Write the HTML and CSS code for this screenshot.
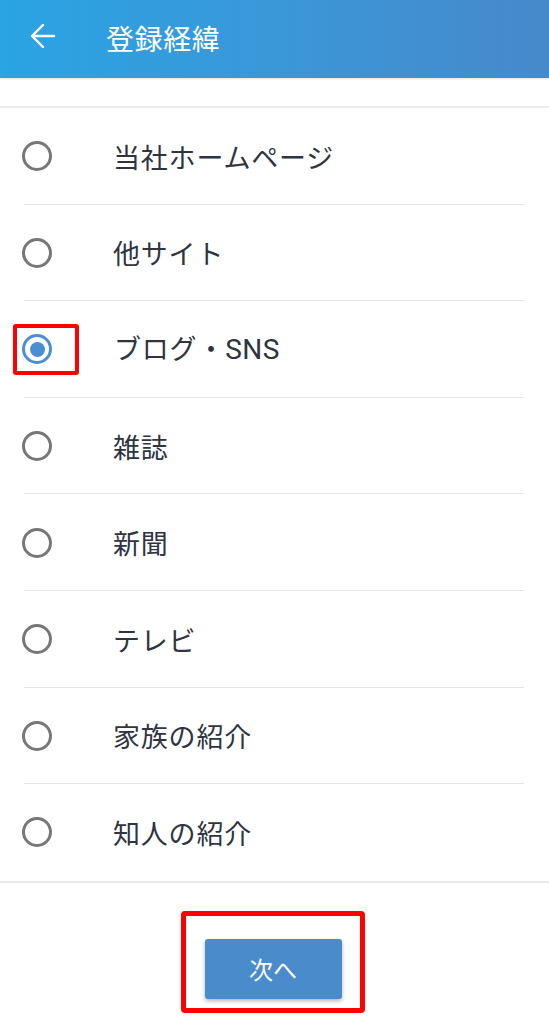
FILE: index.html
```html
<!DOCTYPE html>
<html lang="ja">
<head>
<meta charset="utf-8">
<title>登録経緯</title>
<link rel="stylesheet" href="styles.css">
</head>
<body>
<header class="appbar">
  <span class="back">
    <svg viewBox="0 0 26 26" width="26" height="26"><path d="M2 13H24M13 2L2 13L13 24" fill="none" stroke="#fff" stroke-width="2.4" stroke-linecap="round" stroke-linejoin="round"/></svg>
  </span>
  <h1 class="title">登録経緯</h1>
</header>
<main>
  <ul class="list">
    <li class="row"><span class="radio"></span><span class="label">当社ホームページ</span></li>
    <li class="row"><span class="radio"></span><span class="label">他サイト</span></li>
    <li class="row"><span class="mark"><span class="radio checked"></span></span><span class="label">ブログ・<span class="latin">SNS</span></span></li>
    <li class="row"><span class="radio"></span><span class="label">雑誌</span></li>
    <li class="row"><span class="radio"></span><span class="label">新聞</span></li>
    <li class="row"><span class="radio"></span><span class="label">テレビ</span></li>
    <li class="row"><span class="radio"></span><span class="label">家族の紹介</span></li>
    <li class="row"><span class="radio"></span><span class="label">知人の紹介</span></li>
  </ul>
  <div class="actions">
    <div class="btnmark"><button class="next">次へ</button></div>
  </div>
</main>
</body>
</html>
```
FILE: styles.css
```css
* { box-sizing: border-box; }
html, body { margin: 0; padding: 0; }
body {
  width: 549px;
  height: 1024px;
  overflow: hidden;
  background: #fff;
  font-family: "Noto Sans CJK JP", "Noto Sans", Roboto, sans-serif;
  color: #2e3440;
}
.appbar {
  height: 78px;
  background: linear-gradient(90deg, #2aa4e4 0%, #3a97d8 50%, #4789cb 100%);
  display: flex;
  align-items: center;
  box-shadow: 0 1px 2px rgba(0,0,0,0.12);
}
.back {
  width: 26px;
  height: 26px;
  margin-left: 30px;
  margin-top: -6px;
  display: flex;
}
.title {
  margin: -2px 0 0 50px;
  font-size: 28px;
  font-weight: 400;
  color: #fff;
  line-height: 1;
  letter-spacing: 0.6px;
}
.list {
  list-style: none;
  margin: 28px 0 0;
  padding: 0;
  border-top: 2px solid #ebebeb;
  border-bottom: 2px solid #ebebeb;
}
.row {
  height: 96.6px;
  display: flex;
  align-items: center;
  position: relative;
}
.row + .row::before {
  content: "";
  position: absolute;
  top: -1px;
  left: 24px;
  right: 25px;
  height: 1px;
  background: #e6e6e6;
}
.radio {
  width: 30px;
  height: 30px;
  border: 3px solid #777;
  border-radius: 50%;
  margin-left: 22px;
  flex: none;
  display: flex;
  align-items: center;
  justify-content: center;
}
.radio.checked {
  border-color: #4a8fd4;
  margin-left: 0;
}
.radio.checked::after {
  content: "";
  width: 15px;
  height: 15px;
  border-radius: 50%;
  background: #4a8fd4;
}
.mark {
  margin-left: 13px;
  width: 66px;
  height: 51px;
  border: 4px solid #f00;
  border-radius: 3px;
  display: flex;
  align-items: center;
  padding-left: 5px;
  margin-right: -57px;
}
.label {
  margin-left: 61px;
  font-size: 27px;
  line-height: 1;
  letter-spacing: 0.8px;
  color: #2e3440;
}
.latin {
  font-family: Roboto, "Noto Sans", sans-serif;
  font-size: 28px;
  letter-spacing: 0.5px;
}
.mark + .label { margin-left: 92px; }
.actions {
  display: flex;
  justify-content: center;
  padding-top: 28px;
}
.btnmark {
  width: 184px;
  height: 102px;
  border: 5px solid #f00;
  border-radius: 4px;
  display: flex;
  align-items: flex-start;
  justify-content: center;
  padding-top: 23px;
  margin-left: -3px;
}
.next {
  width: 137px;
  height: 60px;
  border: none;
  border-radius: 3px;
  background: #4a8ccb;
  color: #fff;
  font-family: "Noto Sans CJK JP", sans-serif;
  font-size: 24px;
  box-shadow: 0 2px 4px rgba(0,0,0,0.3);
  padding: 0;
}
```
